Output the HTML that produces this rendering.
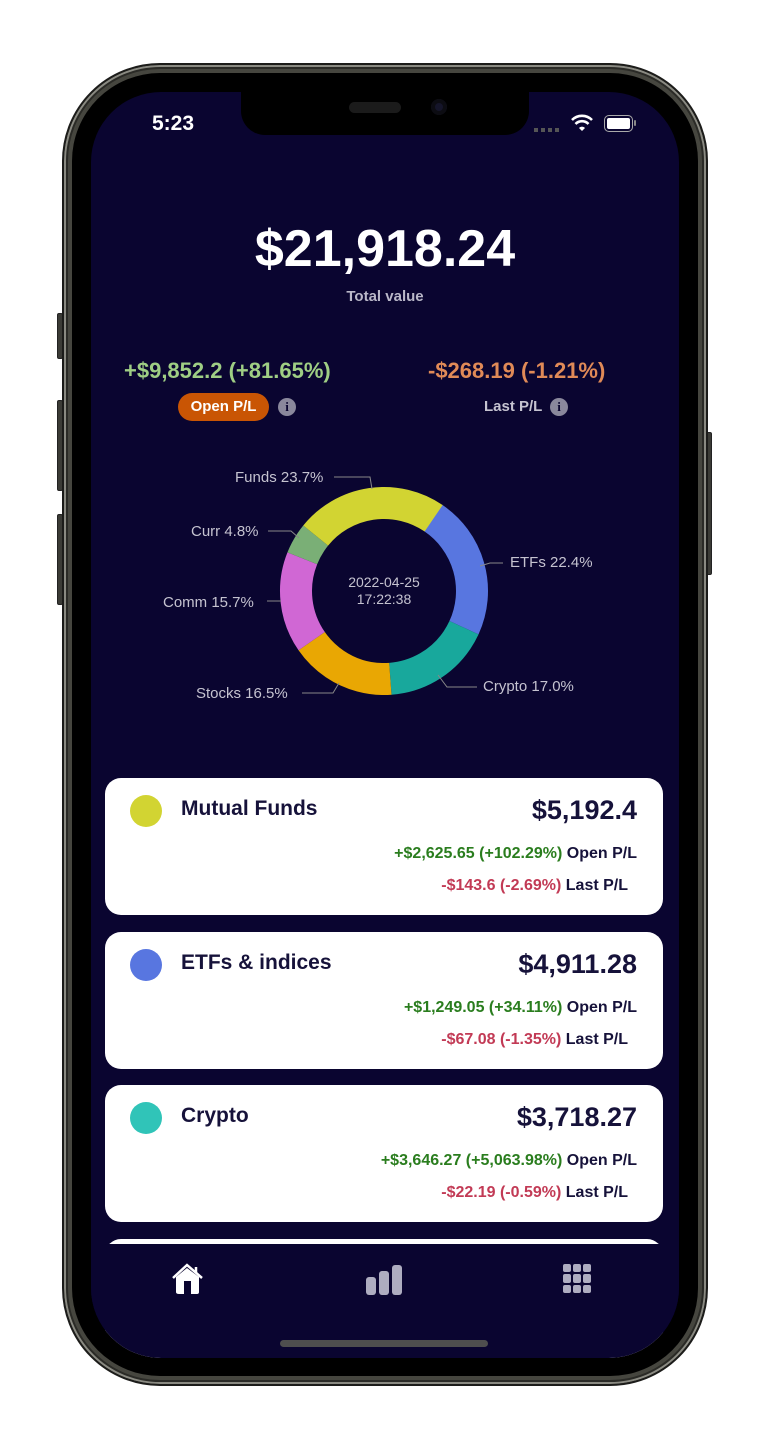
<!DOCTYPE html>
<html><head><meta charset="utf-8">
<style>
*{margin:0;padding:0;box-sizing:border-box}
html,body{width:768px;height:1449px;background:#fff;overflow:hidden;font-family:"Liberation Sans",sans-serif}
.abs{position:absolute}
.btn{position:absolute;background:#3b3b36;border:1px solid #222;border-radius:2px}
.frame{left:62px;top:63px;width:646px;height:1323px;border-radius:98px;background:#46463f;border:2px solid #1c1c1a;box-shadow:inset 0 0 0 2px #8a8a82,inset 0 0 0 4px #2a2a26}
.bezel{left:72px;top:73px;width:626px;height:1303px;border-radius:88px;background:#000}
.screen{left:91px;top:92px;width:588px;height:1266px;border-radius:70px;background:#0a0530;overflow:hidden}
.notch{left:150px;top:0;width:288px;height:43px;background:#000;border-radius:0 0 24px 24px}
.c{text-align:center;width:100%;left:0}
.card{position:absolute;left:14px;width:558px;height:137px;background:#fff;border-radius:16px;color:#0f0b36}
.dot{position:absolute;left:25px;top:17px;width:32px;height:32px;border-radius:50%}
.name{position:absolute;left:76px;top:19px;font-size:21px;font-weight:bold;color:#16123a}
.val{position:absolute;right:26px;top:17px;font-size:27px;font-weight:bold;color:#16123a}
.l1{position:absolute;right:26px;top:67px;font-size:16px;font-weight:bold}
.l2{position:absolute;right:35px;top:99px;font-size:16px;font-weight:bold}
.g{color:#2a7d1e}.r{color:#c23a55}.k{color:#16123a}
.lbl{position:absolute;color:#c5c3d0;font-family:"Liberation Sans",sans-serif;font-size:15px}
</style></head><body>
<div class="btn" style="left:57px;top:313px;width:6px;height:46px"></div>
<div class="btn" style="left:57px;top:400px;width:6px;height:91px"></div>
<div class="btn" style="left:57px;top:514px;width:6px;height:91px"></div>
<div class="btn" style="left:706px;top:432px;width:6px;height:143px"></div>
<div class="abs frame"></div>
<div class="abs bezel"></div>
<div class="abs screen">
  <div class="abs notch">
    <div class="abs" style="left:108px;top:10px;width:52px;height:11px;border-radius:6px;background:#1b1b1b"></div>
    <div class="abs" style="left:190px;top:7px;width:16px;height:16px;border-radius:50%;background:#15152a;box-shadow:inset 0 0 0 4px #0c0c12"></div>
  </div>
  <div class="abs" style="left:61px;top:20px;color:#fff;font-size:21px;font-weight:bold">5:23</div>
  <div class="abs" style="left:443px;top:36px;width:28px;height:4px;background:repeating-linear-gradient(90deg,#555 0 4px,transparent 4px 7px)"></div>
  <svg class="abs" style="left:480px;top:22px" width="22" height="18" viewBox="0 0 22 18"><path d="M1 6 A14 14 0 0 1 21 6" stroke="#fff" stroke-width="2.6" fill="none"/><path d="M4.5 10 A9 9 0 0 1 17.5 10" stroke="#fff" stroke-width="2.6" fill="none"/><path d="M8 14 A4 4 0 0 1 14 14 L11 17Z" fill="#fff"/></svg>
  <div class="abs" style="left:513px;top:23px;width:29px;height:17px;border:1.5px solid #aaa;border-radius:5px;padding:2px"><div style="width:100%;height:100%;background:#fff;border-radius:2px"></div></div>
  <div class="abs" style="left:543px;top:28px;width:2px;height:6px;background:#888;border-radius:1px"></div>

  <div class="abs c" style="top:127px;color:#fff;font-size:52px;font-weight:bold">$21,918.24</div>
  <div class="abs c" style="top:196px;color:#b9b7c8;font-size:15px;font-weight:bold">Total value</div>

  <div class="abs" style="left:33px;top:266px;color:#9fce84;font-size:22px;font-weight:bold">+$9,852.2 (+81.65%)</div>
  <div class="abs" style="left:337px;top:266px;color:#e08a57;font-size:22px;font-weight:bold">-$268.19 (-1.21%)</div>
  <div class="abs" style="left:87px;top:301px;width:91px;height:28px;border-radius:14px;background:#c95504;color:#fff;font-size:15px;font-weight:bold;text-align:center;line-height:28px">Open P/L</div>
  <div class="abs" style="left:187px;top:306px;width:18px;height:18px;border-radius:50%;background:#8a889c;color:#0a0530;font:bold 13px 'Liberation Serif',serif;text-align:center;line-height:18px">i</div>
  <div class="abs" style="left:393px;top:306px;color:#c5c3d0;font-size:15px;font-weight:bold">Last P/L</div>
  <div class="abs" style="left:459px;top:306px;width:18px;height:18px;border-radius:50%;background:#8a889c;color:#0a0530;font:bold 13px 'Liberation Serif',serif;text-align:center;line-height:18px">i</div>

  <svg class="abs" style="left:0;top:0" width="588" height="700">
    <g transform="translate(293,499) rotate(-56)" fill="none" stroke-width="32">
      <circle r="88" stroke="#5876e0" stroke-dasharray="123.8 429.1" stroke-dashoffset="0"/>
      <circle r="88" stroke="#18a89c" stroke-dasharray="94 458.9" stroke-dashoffset="-123.8"/>
      <circle r="88" stroke="#e9a703" stroke-dasharray="91.2 461.7" stroke-dashoffset="-217.8"/>
      <circle r="88" stroke="#d067d4" stroke-dasharray="86.8 466.1" stroke-dashoffset="-309"/>
      <circle r="88" stroke="#7aaf76" stroke-dasharray="26.5 526.4" stroke-dashoffset="-395.8"/>
      <circle r="88" stroke="#d2d432" stroke-dasharray="131.1 421.8" stroke-dashoffset="-422.3"/>
    </g>
    <g stroke="#888" stroke-width="1" fill="none">
      <path d="M243 385 H279 L281 397"/>
      <path d="M177 439 H200 L208 446"/>
      <path d="M176 509 H190"/>
      <path d="M211 601 H242 L248 591"/>
      <path d="M389 474 L399 471 H412"/>
      <path d="M347 583 L356 595 H386"/>
    </g>
  </svg>
  <div class="lbl" style="left:144px;top:377px">Funds 23.7%</div>
  <div class="lbl" style="left:100px;top:431px">Curr 4.8%</div>
  <div class="lbl" style="left:72px;top:502px">Comm 15.7%</div>
  <div class="lbl" style="left:105px;top:593px">Stocks 16.5%</div>
  <div class="lbl" style="left:419px;top:462px">ETFs 22.4%</div>
  <div class="lbl" style="left:392px;top:586px">Crypto 17.0%</div>
  <div class="lbl" style="left:0;width:586px;text-align:center;top:482px;line-height:17px;font-size:14px">2022-04-25<br>17:22:38</div>

  <div class="card" style="top:686px"><div class="dot" style="background:#d2d432"></div><div class="name">Mutual Funds</div><div class="val">$5,192.4</div>
    <div class="l1"><span class="g">+$2,625.65 (+102.29%)</span> <span class="k">Open P/L</span></div>
    <div class="l2"><span class="r">-$143.6 (-2.69%)</span> <span class="k">Last P/L</span></div></div>
  <div class="card" style="top:840px"><div class="dot" style="background:#5876e0"></div><div class="name">ETFs &amp; indices</div><div class="val">$4,911.28</div>
    <div class="l1"><span class="g">+$1,249.05 (+34.11%)</span> <span class="k">Open P/L</span></div>
    <div class="l2"><span class="r">-$67.08 (-1.35%)</span> <span class="k">Last P/L</span></div></div>
  <div class="card" style="top:993px"><div class="dot" style="background:#30c4b8"></div><div class="name">Crypto</div><div class="val">$3,718.27</div>
    <div class="l1"><span class="g">+$3,646.27 (+5,063.98%)</span> <span class="k">Open P/L</span></div>
    <div class="l2"><span class="r">-$22.19 (-0.59%)</span> <span class="k">Last P/L</span></div></div>
  <div class="card" style="top:1147px"></div>
  <div class="abs" style="left:0;top:1152px;width:588px;height:120px;background:#0a0530"></div>

  <svg class="abs" style="left:80px;top:1171px" width="34" height="32" viewBox="0 0 34 32"><path d="M2 15 L16 2 L31 15" stroke="#fff" stroke-width="2.5" fill="none"/><path d="M25 4 V10" stroke="#fff" stroke-width="2.5"/><path d="M5 14 L16 5 L28 14 V29 Q28 31 26 31 H8 Q5 31 5 29Z" fill="#fff"/><rect x="13" y="18" width="7" height="13" fill="#0a0530"/></svg>
  <svg class="abs" style="left:274px;top:1173px" width="38" height="30"><rect x="1" y="12" width="10" height="18" rx="3" fill="#aeadc0"/><rect x="14" y="6" width="10" height="24" rx="3" fill="#aeadc0"/><rect x="27" y="0" width="10" height="30" rx="3" fill="#aeadc0"/></svg>
  <svg class="abs" style="left:472px;top:1172px" width="28" height="30"><g fill="#aeadc0"><rect x="0" y="0" width="8" height="8" rx="2"/><rect x="10" y="0" width="8" height="8" rx="2"/><rect x="20" y="0" width="8" height="8" rx="2"/><rect x="0" y="10" width="8" height="9" rx="2"/><rect x="10" y="10" width="8" height="9" rx="2"/><rect x="20" y="10" width="8" height="9" rx="2"/><rect x="0" y="21" width="8" height="8" rx="2"/><rect x="10" y="21" width="8" height="8" rx="2"/><rect x="20" y="21" width="8" height="8" rx="2"/></g></svg>

  <div class="abs" style="left:189px;top:1248px;width:208px;height:7px;border-radius:4px;background:#4e4e4e"></div>
</div>
</body></html>
